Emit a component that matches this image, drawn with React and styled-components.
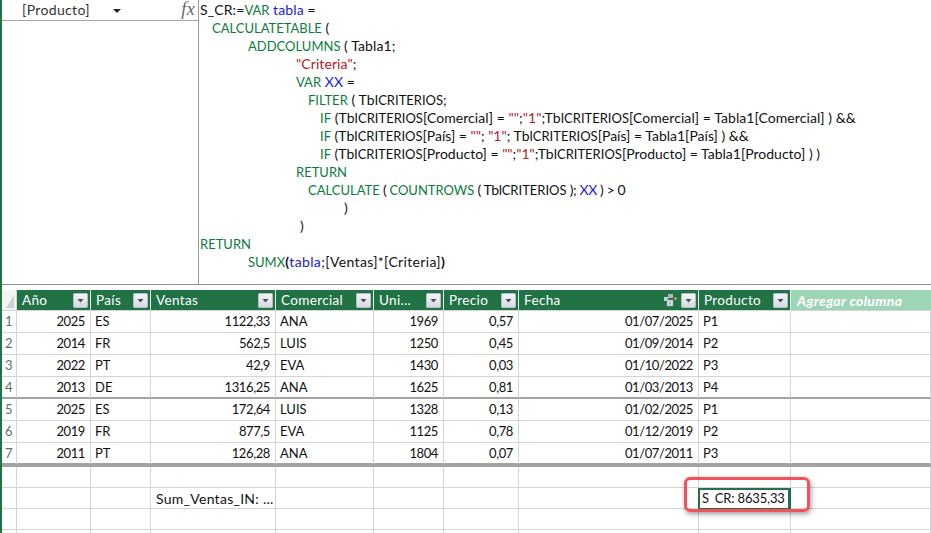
import styled, { createGlobalStyle } from 'styled-components';

const GlobalStyle = createGlobalStyle`
  html, body {
    margin: 0;
    padding: 0;
    background: #fff;
    overflow: hidden;
  }
  * { box-sizing: border-box; }
`;

const COLS = '15px 74px 60px 125px 98px 70px 75px 180px 92px 1fr';

const Page = styled.div`
  width: 931px;
  height: 533px;
  border-left: 2px solid #217346;
  font-family: Lato, "Liberation Sans", sans-serif;
  font-size: 13px;
  color: #111;
  position: relative;
  overflow: hidden;
`;

const FormulaBar = styled.div`
  display: flex;
  height: 285px;
  border-bottom: 1px solid #8f8f8f;
`;

const NameColumn = styled.div`
  width: 197px;
  flex: none;
  border-right: 1px solid #9a9a9a;
`;

const NameBox = styled.div`
  height: 21px;
  border-bottom: 1px solid #a6a6a6;
  display: flex;
  align-items: center;
  padding: 0 2px 2px 20px;
  font-size: 14px;
  letter-spacing: 0.35px;
  color: #333;
`;

const Caret = styled.span`
  width: 0;
  height: 0;
  margin-left: 23px;
  margin-top: 3px;
  border-left: 4px solid transparent;
  border-right: 4px solid transparent;
  border-top: 4px solid #222;
`;

const Fx = styled.span`
  margin-left: auto;
  margin-right: 1px;
  font-family: "Liberation Serif", serif;
  font-style: italic;
  font-size: 18px;
  color: #666;
`;

const Code = styled.div`
  flex: 1;
  padding-top: 0.5px;
`;

const CodeLine = styled.div`
  height: 18px;
  line-height: 17px;
  white-space: pre;
  font-size: 14px;
  letter-spacing: ${p => p.$spacing ?? 0.1}px;
  padding-left: ${p => p.$indent + 1}px;
`;

const Caps = styled.span`
  font-size: 13px;
  letter-spacing: 0;
`;

const Kw = styled(Caps)`color: #0a7d3c;`;
const Var = styled.span`color: #1a1ae0;`;
const Str = styled.span`color: #b3202a;`;
const Match = styled.span`font-weight: 700;`;

const Sheet = styled.div`
  margin-top: 5px;
`;

const Row = styled.div`
  display: grid;
  grid-template-columns: ${COLS};
  height: ${p => p.$h}px;
  border-bottom: ${p => p.$thick || 1}px solid ${p => (p.$thick ? '#a3a3a3' : '#d4d4d4')};
`;

const HeadRow = styled(Row)`
  border-bottom: 1px solid #d4d4d4;
`;

const Corner = styled.div`
  border-right: 1px solid #d4d4d4;
  background: #f3f3f3;
  position: relative;
  &::after {
    content: "";
    position: absolute;
    right: 2px;
    bottom: 2px;
    border-left: 8px solid transparent;
    border-bottom: 13px solid #cfcfcf;
  }
`;

const Head = styled.div`
  background: ${p => (p.$add ? '#9fd5b7' : '#217346')};
  color: #fff;
  display: flex;
  align-items: center;
  gap: 3px;
  padding: 0 2px 0 ${p => (p.$add ? 6 : 5)}px;
  border-right: ${p => (p.$add ? 0 : '1px solid #e4efe8')};
  font-size: ${p => (p.$add ? 14 : 13.5)}px;
  font-weight: ${p => (p.$add ? 700 : 400)};
  font-style: ${p => (p.$add ? 'italic' : 'normal')};
  letter-spacing: 0.35px;
  span:first-child { margin-right: auto; }
`;

const FilterBtn = styled.svg`
  width: 15px;
  height: 15px;
  flex: none;
`;

const RowNum = styled.div`
  border-right: 1px solid #d4d4d4;
  color: #5f6f68;
  padding-left: 3px;
  line-height: 21px;
`;

const Cell = styled.div`
  border-right: 1px solid #d4d4d4;
  padding: 0 ${p => (p.$right ? '5px' : '4px')};
  text-align: ${p => (p.$right ? 'right' : 'left')};
  line-height: 21px;
  white-space: nowrap;
  overflow: hidden;
  letter-spacing: ${p => (p.$right ? '-0.4px' : '0')};
`;

const Measure = styled(Cell)`
  font-size: 14px;
  letter-spacing: 0.27px;
`;

const Selected = styled(Cell)`
  position: relative;
  overflow: visible;
  padding: 0 3px;
  letter-spacing: -0.15px;
  &::after {
    content: "";
    position: absolute;
    inset: 0 -1px -2px -1px;
    border: 2px solid #217346;
    border-bottom-width: 3px;
    border-right-width: 3px;
  }
`;

const Hidden = styled.span`color: transparent;`;

const Callout = styled.div`
  position: absolute;
  left: 682px;
  top: 477px;
  width: 126px;
  height: 35px;
  border: 3px solid #f4515a;
  border-radius: 6px;
  box-shadow: 1px 2px 5px rgba(0, 0, 0, 0.4);
  pointer-events: none;
`;

const Filter = () => (
  <FilterBtn viewBox="0 0 15 15">
    <defs>
      <linearGradient id="fb" x1="0" y1="0" x2="0" y2="1">
        <stop offset="0" stopColor="#f4f5f8" />
        <stop offset="1" stopColor="#d5d8e0" />
      </linearGradient>
    </defs>
    <rect x="0.5" y="0.5" width="14" height="14" rx="1" fill="url(#fb)" stroke="#b9bcc4" />
    <path d="M4.5 6h6l-3 3.5z" fill="#4a4d57" />
  </FilterBtn>
);

const RelationIcon = () => (
  <svg width="15" height="14" viewBox="0 0 15 14">
    <rect x="5" y="1" width="5" height="4" fill="#aeb9c3" />
    <rect x="1" y="4" width="4" height="4" fill="#c6ced6" />
    <rect x="4" y="7" width="6" height="6" fill="#dfe5ea" stroke="#8d99a5" strokeWidth="0.6" />
    <path d="M6.5 8.5h1v3h-1z" fill="#6f7c88" />
    <circle cx="12.5" cy="5.5" r="1.5" fill="#c99a5e" />
  </svg>
);

const Tbl = () => <>Tbl<Caps>CRITERIOS</Caps></>;

const headers = [
  { t: 'Año' }, { t: 'País' }, { t: 'Ventas' }, { t: 'Comercial' }, { t: 'Uni...' },
  { t: 'Precio' }, { t: 'Fecha', rel: true }, { t: 'Producto' },
];

const rows = [
  [2025, 'ES', '1122,33', 'ANA', 1969, '0,57', '01/07/2025', 'P1', 22],
  [2014, 'FR', '562,5', 'LUIS', 1250, '0,45', '01/09/2014', 'P2', 22],
  [2022, 'PT', '42,9', 'EVA', 1430, '0,03', '01/10/2022', 'P3', 22],
  [2013, 'DE', '1316,25', 'ANA', 1625, '0,81', '01/03/2013', 'P4', 22, 2],
  [2025, 'ES', '172,64', 'LUIS', 1328, '0,13', '01/02/2025', 'P1', 22],
  [2019, 'FR', '877,5', 'EVA', 1125, '0,78', '01/12/2019', 'P2', 22],
  [2011, 'PT', '126,28', 'ANA', 1804, '0,07', '01/07/2011', 'P3', 24, 4],
];

const rightCols = [true, false, true, false, true, true, true, false];

const EmptyRow = () => (
  <Row $h={21}>
    <RowNum /><Cell /><Cell /><Cell /><Cell /><Cell /><Cell /><Cell /><Cell /><Cell />
  </Row>
);

export default function App() {
  return (
    <Page>
      <GlobalStyle />
      <FormulaBar>
        <NameColumn>
          <NameBox>
            [Producto]<Caret />
            <Fx>fx</Fx>
          </NameBox>
        </NameColumn>
        <Code>
          <CodeLine $indent={0}>S_CR:=<Kw>VAR</Kw> <Var>tabla</Var> =</CodeLine>
          <CodeLine $indent={12}><Kw>CALCULATETABLE</Kw> (</CodeLine>
          <CodeLine $indent={48}><Kw>ADDCOLUMNS</Kw> ( Tabla1;</CodeLine>
          <CodeLine $indent={96}><Str>"Criteria"</Str>;</CodeLine>
          <CodeLine $indent={96}><Kw>VAR</Kw> <Var>XX</Var> =</CodeLine>
          <CodeLine $indent={108}><Kw>FILTER</Kw> ( <Tbl />;</CodeLine>
          <CodeLine $indent={120} $spacing={0.07}><Kw>IF</Kw> (<Tbl />[Comercial] = <Str>""</Str>;<Str>"1"</Str>;<Tbl />[Comercial] = Tabla1[Comercial] ) &amp;&amp;</CodeLine>
          <CodeLine $indent={120} $spacing={0}><Kw>IF</Kw> (<Tbl />[País] = <Str>""</Str>; <Str>"1"</Str>; <Tbl />[País] = Tabla1[País] ) &amp;&amp;</CodeLine>
          <CodeLine $indent={120} $spacing={0}><Kw>IF</Kw> (<Tbl />[Producto] = <Str>""</Str>;<Str>"1"</Str>;<Tbl />[Producto] = Tabla1[Producto] ) )</CodeLine>
          <CodeLine $indent={96}><Kw>RETURN</Kw></CodeLine>
          <CodeLine $indent={108} $spacing={-0.4}><Kw>CALCULATE</Kw> ( <Kw>COUNTROWS</Kw> ( <Tbl /> ); <Var>XX</Var> ) &gt; 0</CodeLine>
          <CodeLine $indent={144}>)</CodeLine>
          <CodeLine $indent={100}>)</CodeLine>
          <CodeLine $indent={0}><Kw>RETURN</Kw></CodeLine>
          <CodeLine $indent={48} $spacing={0.35}><Kw>SUMX</Kw><Match>(</Match><Var>tabla</Var>;[Ventas]*[Criteria]<Match>)</Match></CodeLine>
        </Code>
      </FormulaBar>

      <Sheet>
        <HeadRow $h={21}>
          <Corner />
          {headers.map(h => (
            <Head key={h.t}>
              <span>{h.t}</span>
              {h.rel && <RelationIcon />}
              <Filter />
            </Head>
          ))}
          <Head $add><span>Agregar columna</span></Head>
        </HeadRow>

        {rows.map((r, i) => (
          <Row key={i} $h={r[8]} $thick={r[9]}>
            <RowNum>{i + 1}</RowNum>
            {r.slice(0, 8).map((v, j) => (
              <Cell key={j} $right={rightCols[j]}>{v}</Cell>
            ))}
            <Cell />
          </Row>
        ))}

        <EmptyRow />
        <Row $h={21}>
          <RowNum /><Cell /><Cell /><Measure $right>Sum_Ventas_IN: ...</Measure><Cell /><Cell /><Cell /><Cell />
          <Selected>S<Hidden>_</Hidden>CR: 8635,33</Selected><Cell />
        </Row>
        <EmptyRow />
        <EmptyRow />
      </Sheet>
      <Callout />
    </Page>
  );
}
